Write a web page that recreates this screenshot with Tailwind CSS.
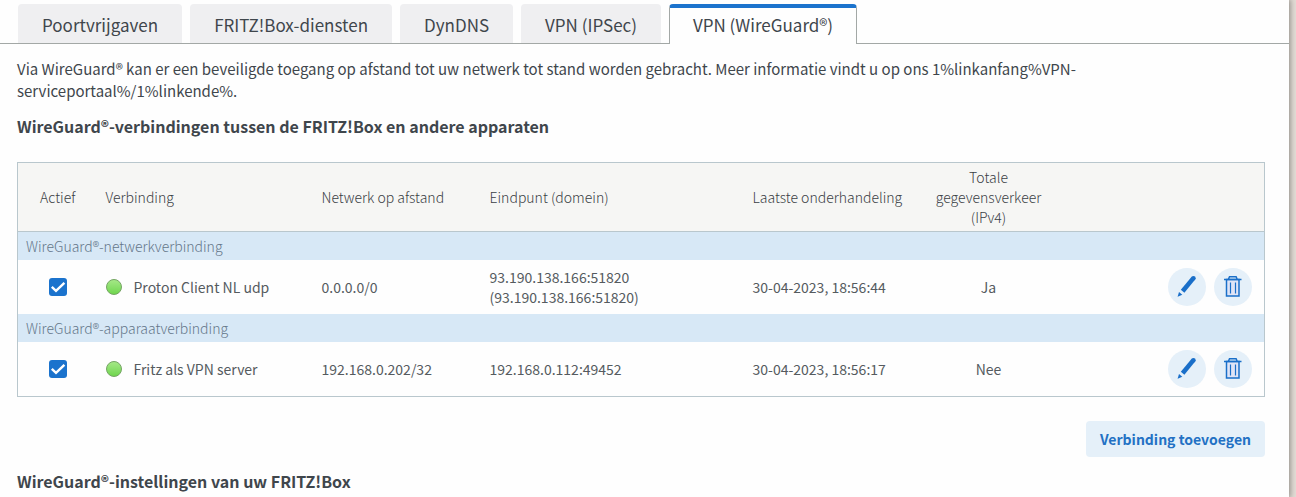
<!DOCTYPE html>
<html lang="nl">
<head>
    <meta charset="UTF-8">
    <meta name="viewport" content="width=device-width, initial-scale=1.0">
    <title>FRITZ!Box - VPN (WireGuard®)</title>
    <script src="https://cdn.jsdelivr.net/npm/@tailwindcss/browser@4"></script>
</head>
<body class="flex min-h-screen overflow-x-hidden bg-[#e2dcd5] font-['Noto_Sans_CJK_SC','Noto_Sans',sans-serif] text-[#3f464c]">

    <!-- Icons -->
    <svg class="hidden">
        <symbol id="icon-check" viewBox="0 0 18 18">
            <path d="M2.8 8.8 7 12.8 15.4 4.8" fill="none" stroke="#fff" stroke-width="2.4" />
        </symbol>
        <symbol id="icon-edit" viewBox="0 0 38 38">
            <path d="M14.6 23.2 25.2 10.4" fill="none" stroke="#1a6fc9" stroke-width="4.6" />
            <circle cx="25.4" cy="10.2" r="2.3" fill="#1a6fc9" />
            <path d="M9.6 28.8 11 23.9 14.3 26.7Z" fill="#1a6fc9" />
        </symbol>
        <symbol id="icon-delete" viewBox="0 0 38 38">
            <path d="M12.5 11.5h12.5v16.5h-12.5z" fill="#dfe4f6" stroke="#1a6fc9" stroke-width="1.5" />
            <path d="M10 11.5h17.5M14.5 11l1-2.2h6.6l1 2.2" fill="none" stroke="#1a6fc9" stroke-width="1.5" />
            <path d="M16.5 14.5v11M21.5 14.5v11" fill="none" stroke="#1a6fc9" stroke-width="1.2" />
        </symbol>
    </svg>

    <main class="mr-[7px] flex-1 bg-[#fefefe] shadow-[0_0_6px_1px_rgba(0,0,0,0.4)]">

        <!-- Tabs -->
        <nav class="flex h-11 items-end gap-2 border-b border-[#a3a8a6] pl-[18px] text-[17px]">
            <a href="#poort" class="h-[39px] rounded-t bg-[#efeff1] px-6 leading-[41px]">Poortvrijgaven</a>
            <a href="#diensten" class="h-[39px] rounded-t bg-[#efeff1] px-6 leading-[41px]">FRITZ!Box-diensten</a>
            <a href="#dyndns" class="h-[39px] rounded-t bg-[#efeff1] px-6 leading-[41px]">DynDNS</a>
            <a href="#ipsec" class="h-[39px] rounded-t bg-[#efeff1] px-6 leading-[41px]">VPN (IPSec)</a>
            <a href="#wireguard" class="-mb-px h-10 rounded-t border-x border-t-4 border-x-[#a3a8a6] border-t-[#1b73cd] bg-[#fefefe] px-[23px] leading-[33px]">VPN (WireGuard®)</a>
        </nav>

        <div class="pr-6 pl-[17px]">
            <p class="mt-3.5 max-w-[1100px] text-[15px] leading-[22px]">Via WireGuard® kan er een beveiligde toegang op afstand tot uw netwerk tot stand worden gebracht. Meer informatie vindt u op ons 1%linkanfang%VPN-serviceportaal%/1%linkende%.</p>

            <h2 class="mt-3 text-base leading-6 font-bold">WireGuard®-verbindingen tussen de FRITZ!Box en andere apparaten</h2>

            <table class="mt-6 w-full table-fixed border-collapse border border-[#b9c7cd] bg-[#fefefe] text-left text-sm leading-5 text-[#555b5f]">
                <colgroup>
                    <col class="w-20">
                    <col class="w-[216px]">
                    <col class="w-[168px]">
                    <col class="w-[263px]">
                    <col class="w-[182px]">
                    <col class="w-[124px]">
                    <col>
                </colgroup>
                <thead class="border-b border-[#b9c7cd] bg-[#f6f6f4] text-[#3a4044]">
                    <tr class="h-[69px]">
                        <th class="text-center font-light">Actief</th>
                        <th class="px-2 font-light">Verbinding</th>
                        <th class="px-2 font-light">Netwerk op afstand</th>
                        <th class="px-2 font-light">Eindpunt (domein)</th>
                        <th class="px-2 font-light">Laatste onderhandeling</th>
                        <th class="px-1 text-center font-light">Totale gegevensverkeer (IPv4)</th>
                        <td></td>
                    </tr>
                </thead>
                <tbody>
                    <tr class="h-7 bg-[#d7e8f6] text-[#65778a]">
                        <th colspan="7" class="px-2 font-light">WireGuard®-netwerkverbinding</th>
                    </tr>
                    <tr class="h-[54px]">
                        <td>
                            <div class="grid place-items-center">
                                <input type="checkbox" checked aria-label="Proton Client NL udp actief" class="col-start-1 row-start-1 size-[18px] appearance-none rounded-[3px] bg-[#1b73cd]">
                                <svg class="pointer-events-none col-start-1 row-start-1 size-[18px]"><use href="#icon-check" /></svg>
                            </div>
                        </td>
                        <td class="px-2">
                            <div class="flex items-center gap-3">
                                <span class="size-4 rounded-full border border-[#76a565] bg-linear-to-b from-[#a4e886] to-[#6fd64d]"></span>
                                Proton Client NL udp
                            </div>
                        </td>
                        <td class="px-2">0.0.0.0/0</td>
                        <td class="px-2">93.190.138.166:51820<br>(93.190.138.166:51820)</td>
                        <td class="px-2">30-04-2023, 18:56:44</td>
                        <td class="px-1 text-center">Ja</td>
                        <td class="pr-3">
                            <div class="flex justify-end gap-2">
                                <button type="button" aria-label="Bewerken" class="rounded-full bg-[#e5f0f9]"><svg class="size-[38px]"><use href="#icon-edit" /></svg></button>
                                <button type="button" aria-label="Verwijderen" class="rounded-full bg-[#e5f0f9]"><svg class="size-[38px]"><use href="#icon-delete" /></svg></button>
                            </div>
                        </td>
                    </tr>
                    <tr class="h-7 bg-[#d7e8f6] text-[#65778a]">
                        <th colspan="7" class="px-2 font-light">WireGuard®-apparaatverbinding</th>
                    </tr>
                    <tr class="h-[55px]">
                        <td>
                            <div class="grid place-items-center">
                                <input type="checkbox" checked aria-label="Fritz als VPN server actief" class="col-start-1 row-start-1 size-[18px] appearance-none rounded-[3px] bg-[#1b73cd]">
                                <svg class="pointer-events-none col-start-1 row-start-1 size-[18px]"><use href="#icon-check" /></svg>
                            </div>
                        </td>
                        <td class="px-2">
                            <div class="flex items-center gap-3">
                                <span class="size-4 rounded-full border border-[#76a565] bg-linear-to-b from-[#a4e886] to-[#6fd64d]"></span>
                                Fritz als VPN server
                            </div>
                        </td>
                        <td class="px-2">192.168.0.202/32</td>
                        <td class="px-2">192.168.0.112:49452</td>
                        <td class="px-2">30-04-2023, 18:56:17</td>
                        <td class="px-1 text-center">Nee</td>
                        <td class="pr-3">
                            <div class="flex justify-end gap-2">
                                <button type="button" aria-label="Bewerken" class="rounded-full bg-[#e5f0f9]"><svg class="size-[38px]"><use href="#icon-edit" /></svg></button>
                                <button type="button" aria-label="Verwijderen" class="rounded-full bg-[#e5f0f9]"><svg class="size-[38px]"><use href="#icon-delete" /></svg></button>
                            </div>
                        </td>
                    </tr>
                </tbody>
            </table>

            <div class="mt-6 flex justify-end">
                <button type="button" class="h-9 rounded bg-[#e5f0f9] px-3.5 text-sm font-bold text-[#2371c4]">Verbinding toevoegen</button>
            </div>

            <h2 class="mt-3 text-base leading-6 font-bold">WireGuard®-instellingen van uw FRITZ!Box</h2>
        </div>
    </main>

</body>
</html>
